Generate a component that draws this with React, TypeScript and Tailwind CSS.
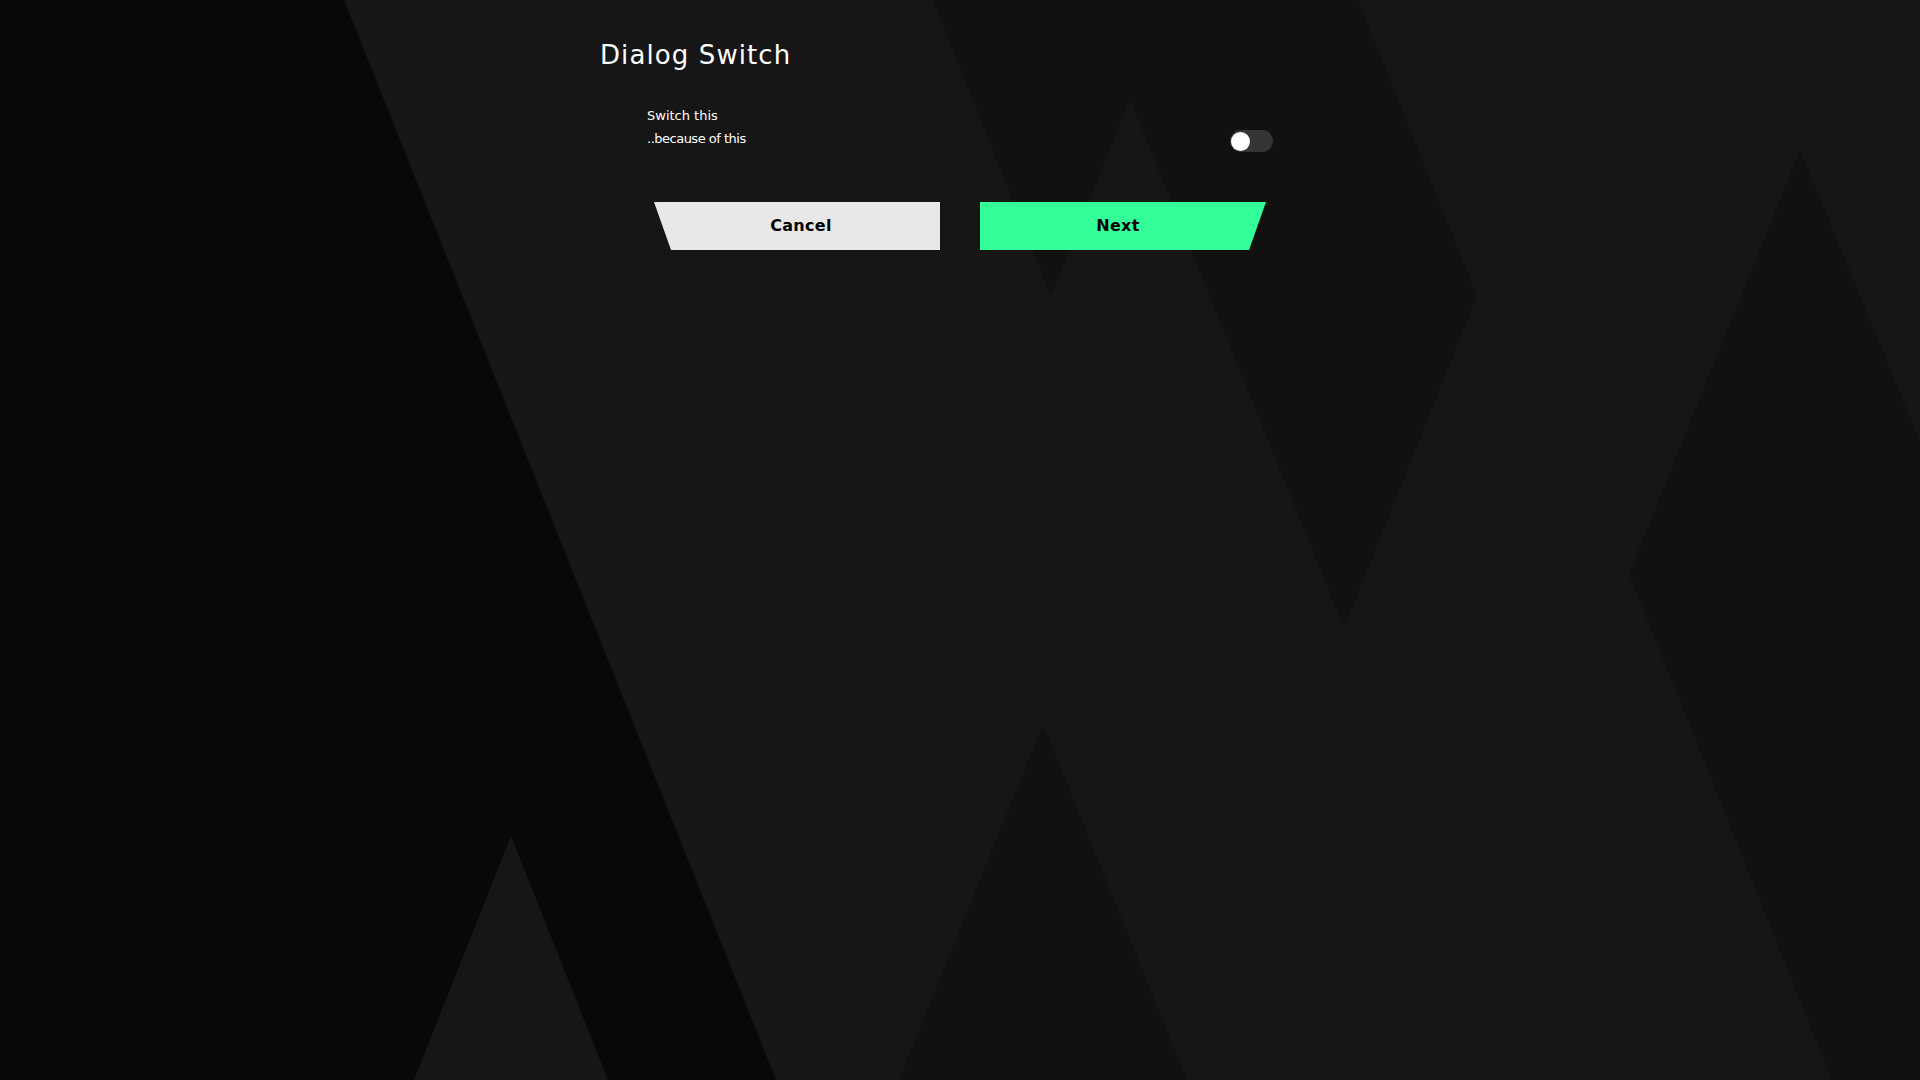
import React, { useState } from "react";

function Background() {
  return (
    <svg
      className="absolute inset-0 h-full w-full"
      viewBox="0 0 1920 1080"
      preserveAspectRatio="none"
      aria-hidden="true"
    >
      <rect x="0" y="0" width="1920" height="1080" fill="#161616" />
      <polygon points="0,0 344,0 776,1080 0,1080" fill="#080808" />
      <polygon points="511,836 414,1080 608,1080" fill="#161616" />
      <polygon points="933,0 1051,296 1130,99 1344,628 1477,296 1358,0" fill="#111111" />
      <polygon points="1043,724 899,1080 1187,1080" fill="#111111" />
      <polygon points="1800,150 1920,441 1920,1080 1832,1080 1629,574" fill="#111111" />
    </svg>
  );
}

function Toggle() {
  const [on, setOn] = useState(false);
  return (
    <button
      type="button"
      onClick={() => setOn(!on)}
      className={`mt-[26px] flex h-[22px] w-[43px] items-center rounded-full p-[1px] ${on ? "bg-[#34fe98]" : "bg-[#353535]"}`}
    >
      <span
        className={`block h-[19px] w-[19px] rounded-full bg-white ${on ? "ml-[22px]" : "ml-0"}`}
      />
    </button>
  );
}

export default function App() {
  return (
    <div className="relative h-screen w-full overflow-hidden bg-[#161616] font-['DejaVu_Sans',sans-serif] text-white">
      <Background />
      <div className="relative mx-auto w-[724px] pt-[39px]">
        <h1 className="pl-[2px] text-[26px] font-normal leading-[32px] tracking-[1.1px] text-white">
          Dialog Switch
        </h1>
        <div className="ml-[49px] mt-[33px] flex w-[626px] items-start justify-between">
          <div className="text-[13px] leading-[23px] text-white">
            <div>Switch this</div>
            <div className="tracking-[-0.5px]">..because of this</div>
          </div>
          <Toggle />
        </div>
        <div className="mt-[50px] flex justify-center gap-[40px]">
          <button
            type="button"
            className="flex h-[48px] w-[286px] items-center justify-center bg-[#e8e8e8] pl-[8px] text-[16px] font-bold tracking-[0.3px] text-black [clip-path:polygon(0_0,100%_0,100%_100%,17px_100%)]"
          >
            Cancel
          </button>
          <button
            type="button"
            className="flex h-[48px] w-[286px] items-center justify-center bg-[#34fe98] pr-[10px] text-[16px] font-bold tracking-[0.3px] text-black [clip-path:polygon(0_0,100%_0,calc(100%_-_17px)_100%,0_100%)]"
          >
            Next
          </button>
        </div>
      </div>
    </div>
  );
}
